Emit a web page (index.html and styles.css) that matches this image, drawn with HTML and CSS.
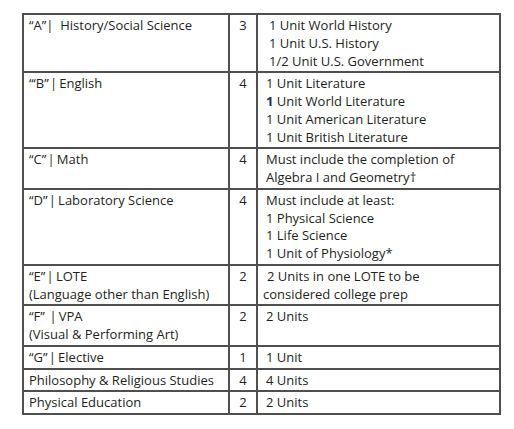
FILE: index.html
```html
<!DOCTYPE html>
<html lang="en">
<head>
<meta charset="utf-8">
<title>Course Requirements</title>
<link rel="stylesheet" href="styles.css">
</head>
<body>
<div class="page">
  <table class="req">
    <colgroup>
      <col class="c-subject">
      <col class="c-years">
      <col class="c-notes">
    </colgroup>
    <tbody>
      <tr class="r-a">
        <td class="subject">“A”|&nbsp; History/Social Science</td>
        <td class="years">3</td>
        <td class="notes indent">1 Unit World History<br>1 Unit U.S. History<br>1/2 Unit U.S. Government</td>
      </tr>
      <tr class="r-b">
        <td class="subject">“‘B”&#8202;|&#8201;English</td>
        <td class="years">4</td>
        <td class="notes">1 Unit Literature<br><span class="mark">1</span> Unit World Literature<br>1 Unit American Literature<br>1 Unit British Literature</td>
      </tr>
      <tr class="r-c">
        <td class="subject">“C”&#8202;|&#8201;Math</td>
        <td class="years">4</td>
        <td class="notes">Must include the completion of<br>Algebra I and Geometry†</td>
      </tr>
      <tr class="r-d">
        <td class="subject">“D”&#8202;|&#8201;Laboratory Science</td>
        <td class="years">4</td>
        <td class="notes">Must include at least:<br>1 Physical Science<br>1 Life Science<br>1 Unit of Physiology*</td>
      </tr>
      <tr class="r-e">
        <td class="subject">“E”&#8202;|&#8201;LOTE<br>(Language other than English)</td>
        <td class="years">2</td>
        <td class="notes"><span class="in">2 Units in one LOTE to be</span><br><span class="out">considered college prep</span></td>
      </tr>
      <tr class="r-f">
        <td class="subject">“F” &#8202;|&#8201;VPA<br>(Visual &amp; Performing Art)</td>
        <td class="years">2</td>
        <td class="notes">2 Units</td>
      </tr>
      <tr class="r-g">
        <td class="subject">“G”&#8202;|&#8201;Elective</td>
        <td class="years">1</td>
        <td class="notes">1 Unit</td>
      </tr>
      <tr class="r-p">
        <td class="subject">Philosophy &amp; Religious Studies</td>
        <td class="years">4</td>
        <td class="notes">4 Units</td>
      </tr>
      <tr class="r-pe">
        <td class="subject">Physical Education</td>
        <td class="years">2</td>
        <td class="notes">2 Units</td>
      </tr>
    </tbody>
  </table>
</div>
</body>
</html>
```

FILE: styles.css
```css
html, body {
  margin: 0;
  padding: 0;
  background: #ffffff;
}

.page {
  padding: 13px 0 0 22px;
}

.req {
  border-collapse: collapse;
  width: 477px;
  table-layout: fixed;
  font-family: "Open Sans", Lato, sans-serif;
  font-size: 13px;
  line-height: 17.75px;
  color: #231f20;
}

.c-subject { width: 206px; }
.c-years { width: 28px; }
.c-notes { width: 243px; }

.req td {
  border: 2px solid #4f4f4f;
  vertical-align: top;
  padding: 2px 4px 1px 5px;
  white-space: nowrap;
}

.req td.years {
  text-align: center;
  padding-left: 0;
  padding-right: 0;
}

.req td.notes {
  padding-left: 8px;
}

.req td.notes.indent {
  padding-left: 11px;
}

.mark {
  color: #1d2f55;
  font-weight: 700;
}

.in {
  padding-left: 1px;
}

.out {
  margin-left: -3px;
}
```
